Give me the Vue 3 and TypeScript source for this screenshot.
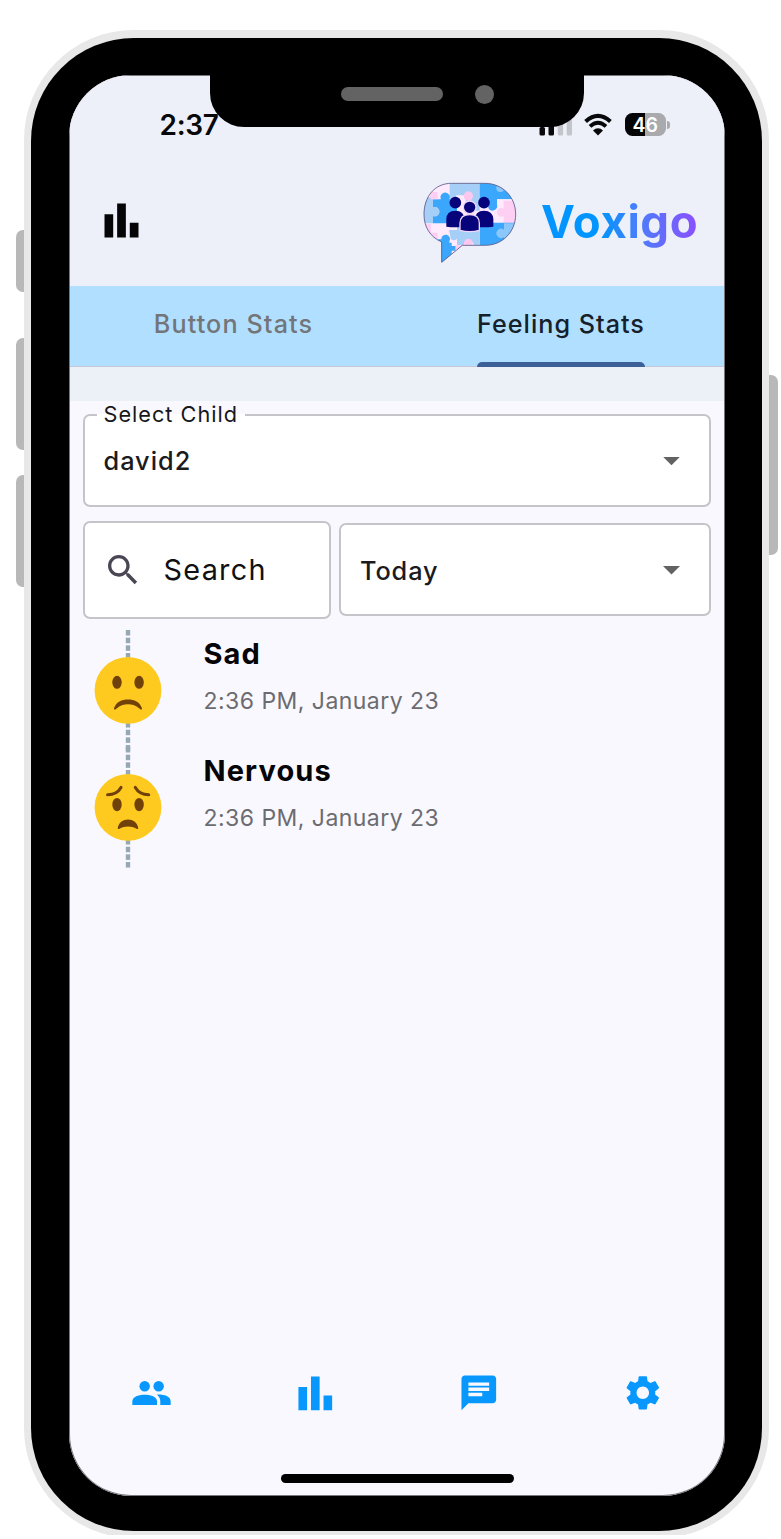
<script setup lang="ts">
interface Feeling {
  name: string
  time: string
  mood: 'sad' | 'nervous'
}

const tabs = [
  { label: 'Button Stats', active: false },
  { label: 'Feeling Stats', active: true },
]

const feelings: Feeling[] = [
  { name: 'Sad', time: '2:36 PM, January 23', mood: 'sad' },
  { name: 'Nervous', time: '2:36 PM, January 23', mood: 'nervous' },
]

const dashes = Array.from({ length: 16 }, (_, i) => i * 7.67)
</script>

<template>
  <div class="page">
    <span class="side-key mute"></span>
    <span class="side-key vol-up"></span>
    <span class="side-key vol-down"></span>
    <span class="side-key power"></span>

    <div class="shell">
      <div class="bezel">
        <div class="screen">
          <div class="notch">
            <span class="speaker"></span>
            <span class="camera"></span>
          </div>

          <header class="top">
            <div class="status">
              <span class="clock">2:37</span>
              <div class="indicators">
                <svg class="signal" width="34" height="24" viewBox="0 0 34 24">
                  <rect x="0.5" y="14" width="5.5" height="8.5" rx="1.6" fill="#08080a" />
                  <rect x="9.5" y="10" width="5.5" height="12.5" rx="1.6" fill="#08080a" />
                  <rect x="18.8" y="5" width="5.3" height="17.5" rx="1.6" fill="#c3c5cb" />
                  <rect x="27.7" y="1" width="5.3" height="21.5" rx="1.6" fill="#c3c5cb" />
                </svg>
                <svg class="wifi" width="28" height="24" viewBox="0 0 28 24">
                  <path d="M1.6 8.5Q14 -2.6 26.4 8.5" fill="none" stroke="#08080a" stroke-width="4.1" />
                  <path d="M6 13.4Q14 6 22 13.4" fill="none" stroke="#08080a" stroke-width="3.9" />
                  <path d="M9 17.4Q14 13.2 19 17.4L14 22.4Z" fill="#08080a" />
                </svg>
                <div class="battery"><span>46</span></div>
                <span class="nub"></span>
              </div>
            </div>

            <div class="appbar">
              <svg class="menu-icon" width="51" height="51" viewBox="0 0 24 24">
                <path d="M4 9h4.1v11H4zM9.95 4h4.1v16h-4.1zM15.9 13H20v7h-4.1z" fill="#050507" />
              </svg>
              <div class="brand">
                <svg class="logo" width="96" height="84" viewBox="0 0 288 252">
                  <defs>
                    <clipPath id="bubble">
                      <path d="M85 4H186C238 4 278 44 278 97S238 190 186 190H118L56 241V180C20 164 3 134 3 97C3 44 35 4 85 4Z" />
                    </clipPath>
                  </defs>
                  <g clip-path="url(#bubble)">
                    <rect width="288" height="252" fill="#fdeafc" />
                    <path d="M0 46H30V124H0Z M80 0H170V50H128V40H100V50H80Z" fill="#a5cff7" />
                    <path d="M30 52H54A14 14 0 1 1 79 52H102V124H30V102A14 14 0 1 0 30 76Z" fill="#3aa7fc" />
                    <path d="M30 76A14 14 0 1 1 30 102Z" fill="#a5cff7" />
                    <path d="M170 0H243V52H222V68A14 14 0 0 1 196 78V52H170Z" fill="#3aa7fc" />
                    <path d="M128 40H170V86H128Z" fill="#a5cff7" />
                    <path d="M243 0H288V52H243V34H220V22Z" fill="#3aa7fc" />
                    <path d="M222 52H288V60H222Z" fill="#fdeafc" />
                    <circle cx="232" cy="18" r="12" fill="#8cc7fb" />
                    <path d="M242 56H288V124H242V102A13 13 0 1 1 242 80Z" fill="#fdd0f3" />
                    <path d="M170 122H288V190H170Z" fill="#3aa7fc" />
                    <path d="M243 124H288V176H243V165A14 14 0 1 1 243 143Z" fill="#8cc7fb" />
                    <path d="M78 144H102V122H170V190H152A14 14 0 0 0 122 190H102V170Q94 178 84 172Z" fill="#a5cff7" />
                    <path d="M44 172H55A13 13 0 1 1 79 178V192H98V206H78V252H44Z" fill="#3aa7fc" />
                    <path d="M44 182H86V252H44Z" fill="#3aa7fc" />
                    <path d="M0 126H24V152H44V182H0Z M98 190H124L98 216Z M22 30H44V52H22Z" fill="#fdd0f3" />
                    <circle cx="136" cy="42" r="14" fill="#fdc8ee" />
                    <circle cx="136" cy="183" r="13" fill="#fdc8ee" />
                  </g>
                  <path d="M85 4H186C238 4 278 44 278 97S238 190 186 190H118L56 241V180C20 164 3 134 3 97C3 44 35 4 85 4Z" fill="none" stroke="#5d5c8c" stroke-width="2.6" />
                  <g fill="#06037b">
                    <circle cx="97" cy="62" r="17.5" />
                    <circle cx="183" cy="62" r="17.5" />
                    <path d="M70 134V112Q70 86 97 86T124 112V134Q97 138 70 134Z" />
                    <path d="M156 134V112Q156 86 183 86T211 112V134Q183 138 156 134Z" />
                    <path d="M111 145V124Q111 98 140 98T169 124V145Q140 153 111 145Z" stroke="#f3d5f5" stroke-width="4" />
                    <circle cx="140" cy="76" r="19" stroke="#f3d5f5" stroke-width="4" />
                  </g>
                </svg>
                <span class="wordmark">Voxigo</span>
              </div>
            </div>
          </header>

          <nav class="tabs">
            <div v-for="tab in tabs" :key="tab.label" class="tab" :class="{ active: tab.active }">
              <span>{{ tab.label }}</span>
            </div>
          </nav>
          <div class="strip"></div>

          <main class="content">
            <div class="field child-field">
              <span class="legend">Select Child</span>
              <span class="value">david2</span>
              <span class="caret"></span>
            </div>

            <div class="filters">
              <div class="field search-field">
                <svg width="40" height="40" viewBox="0 0 24 24">
                  <path fill="#4a4653" d="M15.5 14h-.79l-.28-.27C15.41 12.59 16 11.11 16 9.5 16 5.91 13.09 3 9.5 3S3 5.91 3 9.5 5.91 16 9.5 16c1.61 0 3.09-.59 4.23-1.57l.27.28v.79l5 4.99L20.49 19l-4.99-5zm-6 0C7.01 14 5 11.99 5 9.5S7.01 5 9.5 5 14 7.01 14 9.5 11.99 14 9.5 14z" />
                </svg>
                <span class="placeholder">Search</span>
              </div>
              <div class="field range-field">
                <span class="value today">Today</span>
                <span class="caret"></span>
              </div>
            </div>

            <ul class="timeline">
              <li v-for="item in feelings" :key="item.name" class="entry">
                <svg class="marker" width="68" height="121" viewBox="-34 0 68 121">
                  <rect v-for="y in dashes" :key="y" x="-2.2" :y="y" width="4.4" height="5.5" fill="#96a8b4" />
                  <g transform="translate(0 60.4)">
                    <circle r="33.4" fill="#ffca20" />
                    <g v-if="item.mood === 'sad'" fill="#70420a">
                      <ellipse cx="-11" cy="-8.1" rx="4.7" ry="6.5" />
                      <ellipse cx="11.1" cy="-8.1" rx="4.7" ry="6.5" />
                      <path d="M-14 17.8C-11.5 11.5 -6.5 9.2 0 9.2S11.5 11.5 14 17.8C14.2 19.3 13 19.6 12 18.7C8 15 4.5 13.8 0 13.8S-8 15 -12 18.7C-13 19.6 -14.2 19.3 -14 17.8Z" />
                    </g>
                    <g v-else fill="#70420a">
                      <ellipse cx="-11" cy="-2.8" rx="4.7" ry="6.7" />
                      <ellipse cx="11.1" cy="-2.8" rx="4.7" ry="6.7" />
                      <path d="M-10.2 20.3C-9 15 -5 12.2 0 12.2S9 15 10.2 20.3C10.4 21.8 9.5 22 8.5 21.3C3.5 18.3 -3.5 18.3 -8.5 21.3C-9.5 22 -10.4 21.8 -10.2 20.3Z" />
                      <path d="M-20.4 -12.7Q-11 -12.9 -7 -20M20.7 -12.7Q11.3 -12.9 7.3 -20" fill="none" stroke="#70420a" stroke-width="3.1" stroke-linecap="round" />
                    </g>
                  </g>
                </svg>
                <div class="entry-text">
                  <strong>{{ item.name }}</strong>
                  <span>{{ item.time }}</span>
                </div>
              </li>
            </ul>
          </main>

          <footer class="bottom">
            <div class="slot">
              <svg width="39" height="24.4" viewBox="0 0 120 75">
                <g fill="#0797fd">
                  <circle cx="39" cy="16" r="16" />
                  <circle cx="82" cy="16" r="16" />
                  <path d="M1 74V62C2 46 24 42 39 42S76 46 77 62V74Z" />
                  <path d="M77 42C98 41 118 47 119 62V74H87V62Q87 50 77 42Z" />
                </g>
              </svg>
            </div>
            <div class="slot nudge">
              <svg width="50.6" height="50.6" viewBox="0 0 24 24">
                <path d="M4 9h4.1v11H4zM9.95 4h4.1v16h-4.1zM15.9 13H20v7h-4.1z" fill="#0797fd" />
              </svg>
            </div>
            <div class="slot nudge">
              <svg width="41.6" height="41.6" viewBox="0 0 24 24">
                <path fill="#0797fd" d="M20 2H4c-1.1 0-1.99.9-1.99 2L2 22l4-4h14c1.1 0 2-.9 2-2V4c0-1.1-.9-2-2-2zM6 9h12v2H6V9zm8 5H6v-2h8v2zm4-6H6V6h12v2z" />
              </svg>
            </div>
            <div class="slot nudge">
              <svg width="41.6" height="41.6" viewBox="0 0 24 24">
                <path fill="#0797fd" d="M19.14 12.94c.04-.3.06-.61.06-.94 0-.32-.02-.64-.07-.94l2.03-1.58c.18-.14.23-.41.12-.61l-1.92-3.32c-.12-.22-.37-.29-.59-.22l-2.39.96c-.5-.38-1.03-.7-1.62-.94l-.36-2.54c-.04-.24-.24-.41-.48-.41h-3.84c-.24 0-.43.17-.47.41l-.36 2.54c-.59.24-1.13.57-1.62.94l-2.39-.96c-.22-.08-.47 0-.59.22L2.74 8.87c-.12.21-.08.47.12.61l2.03 1.58c-.05.3-.09.63-.09.94s.02.64.07.94l-2.03 1.58c-.18.14-.23.41-.12.61l1.92 3.32c.12.22.37.29.59.22l2.39-.96c.5.38 1.03.7 1.62.94l.36 2.54c.05.24.24.41.48.41h3.84c.24 0 .44-.17.47-.41l.36-2.54c.59-.24 1.13-.56 1.62-.94l2.39.96c.22.08.47 0 .59-.22l1.92-3.32c.12-.22.07-.47-.12-.61l-2.01-1.58zM12 15.6c-1.98 0-3.6-1.62-3.6-3.6s1.62-3.6 3.6-3.6 3.6 1.62 3.6 3.6-1.62 3.6-3.6 3.6z" />
              </svg>
            </div>
          </footer>
          <div class="home-bar"></div>
        </div>
      </div>
    </div>
  </div>
</template>

<style>
body {
  background: #fff;
}
</style>

<style scoped>
.page {
  position: relative;
  box-sizing: border-box;
  width: 781px;
  height: 1535px;
  padding: 30px 0 0 24px;
  overflow: hidden;
  font-family: Inter, "Liberation Sans", sans-serif;
  color: #1b1b1f;
  white-space: nowrap;
}
.page * {
  box-sizing: border-box;
}
.side-key {
  position: absolute;
  left: 16px;
  width: 8px;
  border-radius: 7px 0 0 7px;
  background: #b8b8b8;
}
.mute { top: 230px; height: 62px; }
.vol-up { top: 338px; height: 112px; }
.vol-down { top: 475px; height: 112px; }
.power {
  top: 375px;
  left: 769px;
  height: 180px;
  width: 8.5px;
  border-radius: 0 7px 7px 0;
}
.shell {
  width: 745px;
  height: 1508px;
  padding: 7.5px 7px 7px;
  border-radius: 110px;
  background: #e8e8e8;
}
.bezel {
  width: 731px;
  height: 1493.5px;
  padding: 37.5px 37px 35px 38px;
  border-radius: 103px;
  background: #000;
}
.screen {
  position: relative;
  display: flex;
  flex-direction: column;
  width: 656px;
  height: 1421px;
  padding: 1px;
  border-radius: 62px;
  overflow: hidden;
  background: #f9f8ff;
  box-shadow: inset 0 0 0 1px #77777b;
}
.notch {
  position: absolute;
  z-index: 2;
  top: 0;
  left: 141px;
  width: 374px;
  height: 51.5px;
  border-radius: 0 0 34px 34px;
  background: #000;
}
.speaker,
.camera {
  position: absolute;
  background: #636363;
}
.speaker {
  top: 12px;
  left: 131px;
  width: 102px;
  height: 14px;
  border-radius: 7px;
}
.camera {
  top: 9.5px;
  left: 264.5px;
  width: 19px;
  height: 19px;
  border-radius: 50%;
}
.top {
  height: 209.5px;
  flex: none;
  background: #edf0f8;
}
.status {
  display: flex;
  justify-content: space-between;
  align-items: center;
  height: 97px;
  padding: 0 54.5px 0 89.5px;
}
.clock {
  font-size: 28px;
  font-weight: 600;
  letter-spacing: -0.3px;
  color: #08080a;
}
.indicators {
  display: flex;
  align-items: center;
}
.wifi {
  margin: 0 12.5px 0 11px;
}
.battery {
  width: 41.5px;
  height: 23.5px;
  border-radius: 7.5px;
  background: linear-gradient(90deg, #050507 0 19.5px, #a9aaae 19.5px);
  color: #fff;
  font-size: 19.5px;
  font-weight: 600;
  line-height: 24px;
  text-align: center;
}
.nub {
  width: 2.5px;
  height: 8px;
  margin-left: 1px;
  border-radius: 0 3px 3px 0;
  background: #a9aaae;
}
.appbar {
  display: flex;
  justify-content: space-between;
  align-items: flex-start;
  padding: 8px 24px 0 26px;
}
.menu-icon {
  margin-top: 14px;
}
.brand {
  display: flex;
  padding-top: 1px;
}
.logo {
  display: block;
  margin-right: 22px;
}
.wordmark {
  width: 159px;
  line-height: 56px;
  margin-top: 12px;
  font-size: 45.5px;
  font-weight: 700;
  letter-spacing: 0.6px;
  background: linear-gradient(90deg, #0295ff 0 38%, #4d7cfb 62%, #8a50ff 98%);
  background-clip: text;
  -webkit-background-clip: text;
  color: transparent;
}
.tabs {
  flex: none;
  display: flex;
  height: 81.5px;
  background: #b1dfff;
  border-bottom: 1.5px solid #c6c8d8;
}
.tab {
  flex: 1;
  display: flex;
  justify-content: center;
  font-size: 25.2px;
  line-height: 77px;
  letter-spacing: 1.1px;
  color: #737578;
  font-weight: 500;
}
.tab span {
  position: relative;
  height: 81.5px;
}
.tab.active {
  letter-spacing: 1px;
  color: #16202a;
}
.tab.active span {
  left: 0.5px;
}
.tab.active span::after {
  content: "";
  position: absolute;
  left: 0;
  right: 0;
  bottom: 0;
  height: 5.5px;
  border-radius: 5px 5px 0 0;
  background: #3e6098;
}
.strip {
  flex: none;
  height: 34px;
  background: #ecf0f7;
}
.content {
  flex: 1;
  padding: 13px 13px 0 13px;
}
.field {
  display: flex;
  align-items: center;
  border: 2px solid #c5c5c9;
  border-radius: 7px;
  background: #fff;
}
.child-field {
  position: relative;
  height: 93px;
  padding: 0 29px 0 18.5px;
  justify-content: space-between;
}
.legend {
  position: absolute;
  top: -13px;
  left: 12px;
  width: 148px;
  padding-left: 6.5px;
  font-size: 21.7px;
  line-height: 22px;
  letter-spacing: 1px;
  color: #17171a;
  background: linear-gradient(#f9f8ff 0 50%, #fff 50%);
}
.value {
  font-size: 25.3px;
  font-weight: 500;
  letter-spacing: 1px;
  color: #1b1b1e;
}
.today {
  padding-top: 2px;
  letter-spacing: 0.9px;
}
.caret {
  width: 17px;
  height: 8.5px;
  margin-top: 1px;
  background: #626264;
  clip-path: polygon(0 0, 100% 0, 50% 100%);
}
.filters {
  display: flex;
  align-items: center;
  gap: 8px;
  margin-top: 13.5px;
}
.search-field {
  width: 248px;
  height: 98.5px;
  padding-left: 18px;
}
.placeholder {
  margin-left: 20.5px;
  font-size: 28.8px;
  letter-spacing: 1.3px;
  color: #101012;
}
.range-field {
  flex: 1;
  height: 93px;
  padding: 0 29px 0 19px;
  justify-content: space-between;
}
.timeline {
  margin: 11px 0 0;
  padding: 0 0 0 11px;
  list-style: none;
}
.entry {
  display: flex;
  height: 117px;
}
.marker {
  flex: none;
}
.entry-text {
  padding: 6px 0 0 41.5px;
  display: flex;
  flex-direction: column;
}
.entry-text strong {
  height: 36px;
  line-height: 36px;
  font-size: 29px;
  font-weight: 700;
  letter-spacing: 1.1px;
  color: #050507;
}
.entry-text span {
  margin-top: 14px;
  line-height: 30px;
  font-size: 23px;
  letter-spacing: 0.46px;
  color: #6c6c70;
}
.bottom {
  flex: none;
  display: flex;
  align-items: center;
  height: 60px;
}
.slot {
  flex: 1;
  display: flex;
  justify-content: center;
}
.nudge {
  padding-left: 1.5px;
}
.home-bar {
  flex: none;
  align-self: center;
  width: 233px;
  height: 8.5px;
  margin: 51px 0 12.5px;
  border-radius: 5px;
  background: #000;
}
</style>
